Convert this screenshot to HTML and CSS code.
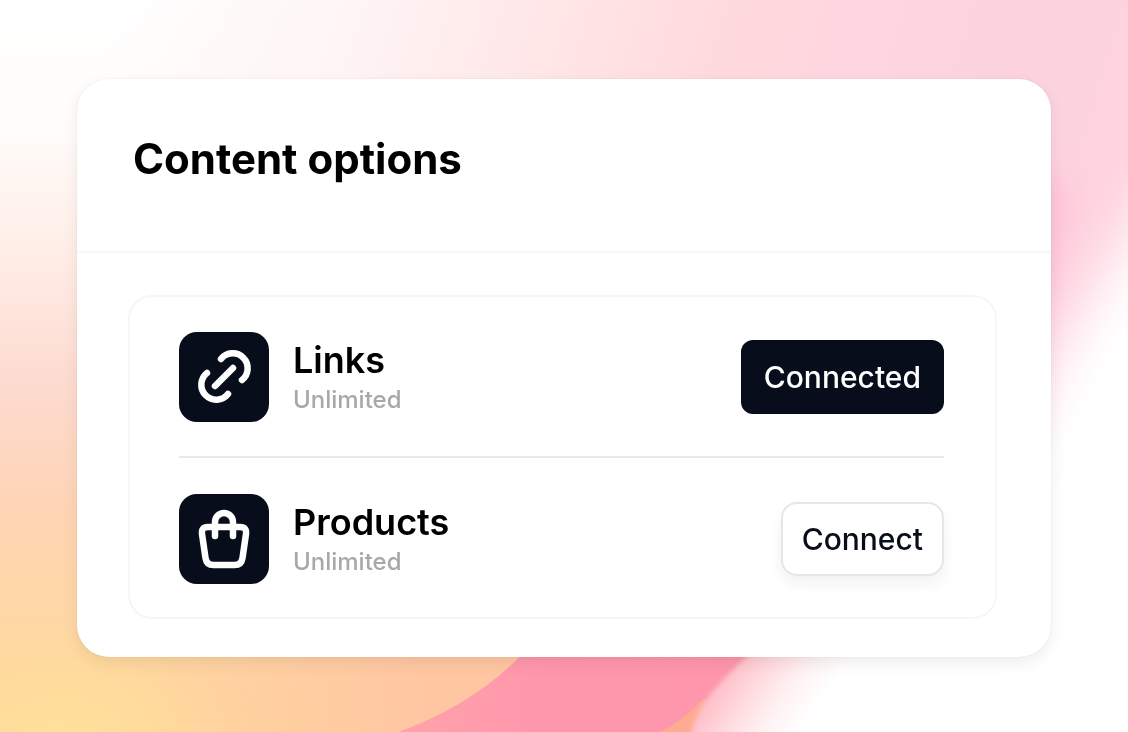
FILE: index.html
```html
<!DOCTYPE html>
<html lang="en">
<head>
    <meta charset="UTF-8">
    <meta name="viewport" content="width=device-width, initial-scale=1">
    <title>Content options</title>
    <link rel="stylesheet" href="styles.css">
</head>
<body>
<svg class="backdrop" viewBox="0 0 1128 732" preserveAspectRatio="none" aria-hidden="true">
    <defs>
        <linearGradient id="warm" x1="0" y1="0" x2="0" y2="1">
            <stop offset="0" stop-color="#fff"/>
            <stop offset="0.18" stop-color="#fffcfa"/>
            <stop offset="0.36" stop-color="#ffece5"/>
            <stop offset="0.52" stop-color="#fddbd0"/>
            <stop offset="0.7" stop-color="#ffd4b4"/>
            <stop offset="0.86" stop-color="#ffd7a2"/>
            <stop offset="1" stop-color="#ffd99c"/>
        </linearGradient>
        <linearGradient id="top" gradientUnits="userSpaceOnUse" x1="120" y1="0" x2="1080" y2="300">
            <stop offset="0" stop-color="#fff5f5" stop-opacity="0"/>
            <stop offset="0.22" stop-color="#fff5f5"/>
            <stop offset="0.42" stop-color="#ffe6e7"/>
            <stop offset="0.58" stop-color="#ffdadc"/>
            <stop offset="0.72" stop-color="#ffd5e0"/>
            <stop offset="0.86" stop-color="#fcd2df"/>
            <stop offset="1" stop-color="#ffd3e0"/>
        </linearGradient>
        <linearGradient id="peach" x1="0" y1="0" x2="1" y2="0">
            <stop offset="0.1" stop-color="#ffc6a2" stop-opacity="0"/>
            <stop offset="0.38" stop-color="#ffc6a2"/>
        </linearGradient>
        <radialGradient id="sun">
            <stop offset="0" stop-color="#ffe19a"/>
            <stop offset="1" stop-color="#ffdc9a" stop-opacity="0"/>
        </radialGradient>
        <linearGradient id="band" x1="0" y1="0" x2="1" y2="0">
            <stop offset="0" stop-color="#ffa3aa"/>
            <stop offset="0.3" stop-color="#ff97ac"/>
            <stop offset="1" stop-color="#ff96ab"/>
        </linearGradient>
        <linearGradient id="glow" gradientUnits="userSpaceOnUse" x1="712" y1="672" x2="800" y2="732">
            <stop offset="0" stop-color="#ffb2bf"/>
            <stop offset="0.35" stop-color="#ffd6da"/>
            <stop offset="0.7" stop-color="#fff2f3"/>
            <stop offset="1" stop-color="#fff"/>
        </linearGradient>
        <filter id="soft" x="-50%" y="-50%" width="200%" height="200%">
            <feGaussianBlur stdDeviation="26"/>
        </filter>
        <filter id="haze" x="-50%" y="-50%" width="200%" height="200%">
            <feGaussianBlur stdDeviation="14"/>
        </filter>
        <filter id="edge">
            <feGaussianBlur stdDeviation="2"/>
        </filter>
    </defs>
    <rect width="1128" height="732" fill="url(#warm)"/>
    <rect y="560" width="1128" height="172" fill="url(#peach)"/>
    <ellipse cx="60" cy="732" rx="170" ry="100" fill="url(#sun)"/>
    <rect x="90" width="1038" height="600" fill="url(#top)"/>
    <!-- pink ribbon along the right side and bottom -->
    <path d="M1010 170H1056L1072 200L1060 270L1040 320H1010Z" fill="#ffc4d8" filter="url(#haze)"/>
    <path d="M1220 130L1160 180Q1116 260 1060 350L940 600V840H1220Z" fill="#fff" filter="url(#soft)"/>
    <path d="M398 732Q476 704 526 650H840V732Z" fill="url(#band)"/>
    <path d="M660 732Q684 720 702 700H712V732Z" fill="#ffab92"/>
    <path d="M684 760Q692 716 712 692Q734 666 766 640H1160V760Z" fill="url(#glow)" filter="url(#edge)"/>
</svg>

<main class="card">
    <header class="card-header">
        <h1 class="card-title">Content options</h1>
    </header>
    <div class="card-body">
        <ul class="options">
            <li class="option">
                <span class="option-icon">
                    <svg viewBox="0 0 90 90" aria-hidden="true">
                        <path d="M42 27A14.95 14.95 0 1 1 63 48"/>
                        <path d="M28 41A14.95 14.95 0 1 0 49 62"/>
                        <path d="M36 54L54 36"/>
                    </svg>
                </span>
                <div class="option-text">
                    <h2 class="option-name">Links</h2>
                    <p class="option-note">Unlimited</p>
                </div>
                <button class="btn btn-dark" type="button">Connected</button>
            </li>
            <li class="option">
                <span class="option-icon">
                    <svg viewBox="0 0 90 90" aria-hidden="true">
                        <path d="M36 42V28A9 9 0 0 1 54 28V42"/>
                        <path d="M29 33H61Q68 33 67 40L63.500 64Q62.500 71 55.500 71H34.500Q27.500 71 26.500 64L23 40Q22 33 29 33Z"/>
                    </svg>
                </span>
                <div class="option-text">
                    <h2 class="option-name">Products</h2>
                    <p class="option-note">Unlimited</p>
                </div>
                <button class="btn btn-light" type="button">Connect</button>
            </li>
        </ul>
    </div>
</main>
</body>
</html>
```
FILE: styles.css
```css
* {
    margin: 0;
    padding: 0;
    box-sizing: border-box;
}

body {
    min-height: 100vh;
    padding: 79px 77px 76px;
    font-family: Inter, "Liberation Sans", sans-serif;
    color: #000;
    background: #fff;
}

/* sits behind the card */
.backdrop {
    position: fixed;
    top: 0;
    left: 0;
    z-index: -1;
    width: 100%;
    height: 100%;
}

.card {
    background: #fff;
    border-radius: 32px;
    box-shadow: 0 0 2px rgba(0, 0, 0, 0.1), 0 6px 16px rgba(0, 0, 0, 0.07);
}

.card-header {
    padding: 54px 56px 66px;
    border-bottom: 2px solid #f8f8f8;
}

.card-title {
    font-size: 42px;
    line-height: 52px;
    font-weight: 700;
}

.card-body {
    padding: 42px 54px 38px 51px;
}

.options {
    padding: 0 51px 0 49px;
    list-style: none;
    border: 2px solid #f6f6f6;
    border-radius: 24px;
}

.option {
    display: flex;
    align-items: center;
    gap: 24px;
    padding: 35px 0 34px;
}

.option + .option {
    padding: 36px 0 33px;
    border-top: 2px solid #e9e9e9;
}

.option-icon {
    flex: none;
    width: 90px;
    height: 90px;
    border-radius: 18px;
    background: #070d1a;
}

.option-icon svg {
    display: block;
    fill: none;
    stroke: #fff;
    stroke-width: 6.5;
    stroke-linecap: round;
    stroke-linejoin: round;
}

.option-text {
    flex: 1;
}

.option-name {
    padding-top: 2px;
    font-size: 36px;
    line-height: 44px;
    font-weight: 600;
}

.option-note {
    font-size: 24px;
    line-height: 36px;
    font-weight: 500;
    color: #a8a8a8;
}

.btn {
    padding: 0 21px;
    font-family: inherit;
    font-size: 30px;
    line-height: 70px;
    font-weight: 500;
    border: 2px solid #070d1a;
    border-radius: 12px;
    cursor: pointer;
}

.btn-dark {
    color: #fff;
    background: #070d1a;
}

.btn-light {
    padding: 0 19px;
    color: #070d1a;
    background: #fff;
    border-color: #e6e6e8;
    border-radius: 16px;
    box-shadow: 0 8px 14px rgba(20, 30, 60, 0.06);
}
```
